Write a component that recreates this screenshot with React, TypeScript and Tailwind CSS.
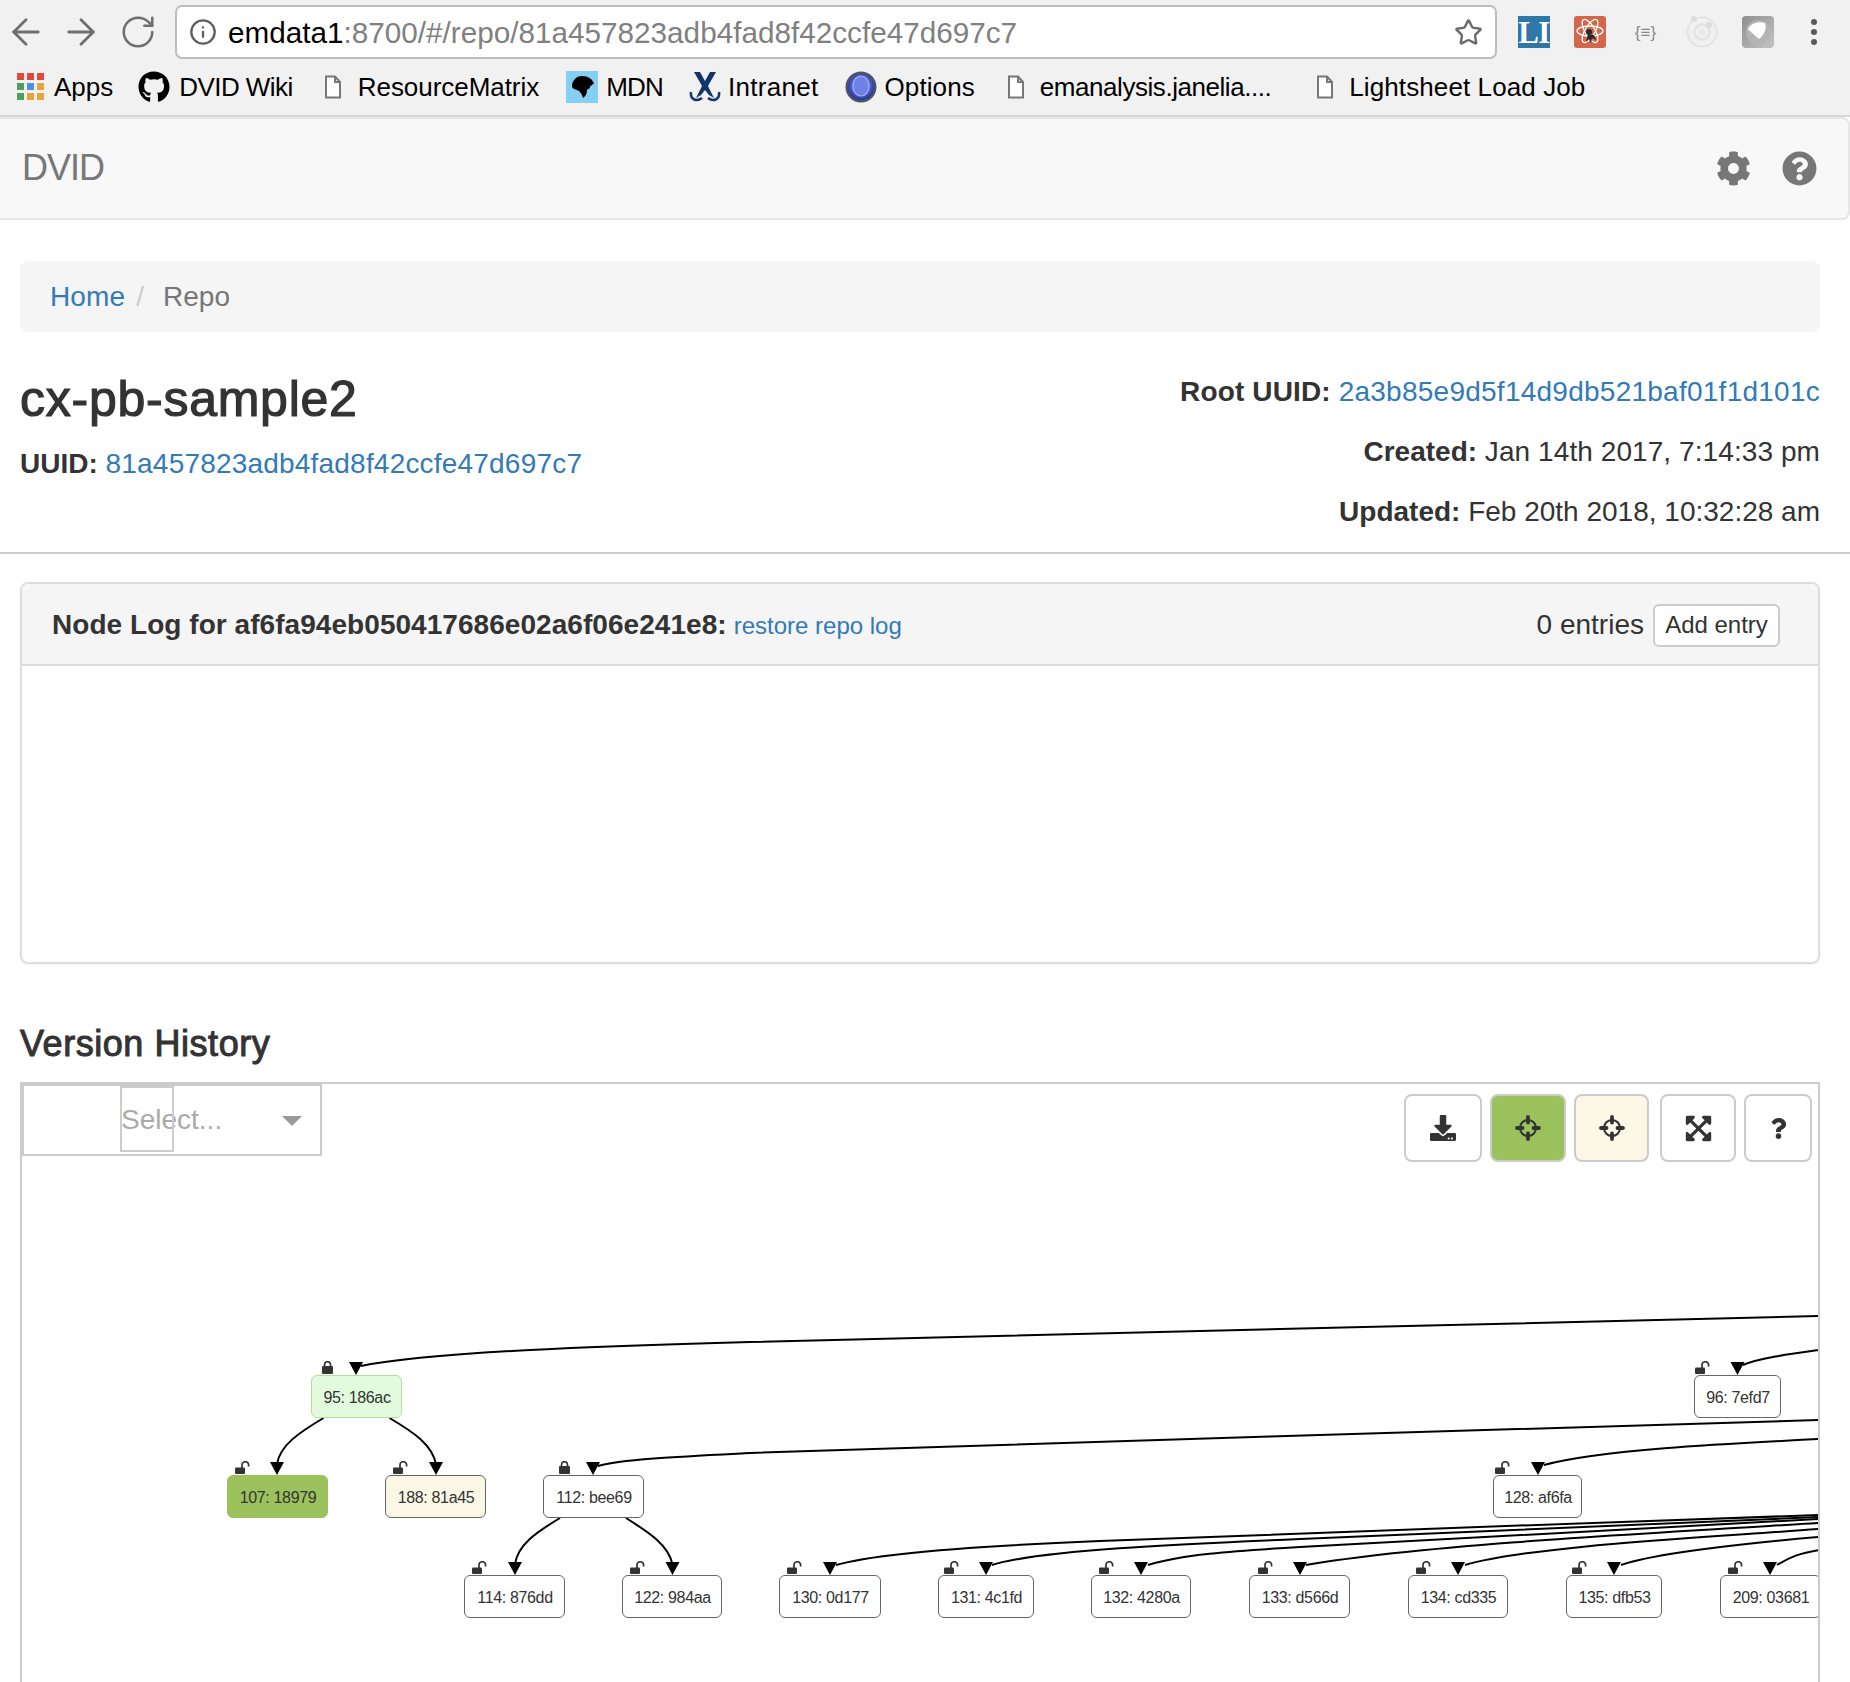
import React from "react";
import { ArrowLeft, ArrowRight, RotateCw, Info, Star } from "lucide-react";
import { FaGithub, FaCog, FaQuestionCircle, FaDownload, FaExpandArrowsAlt, FaQuestion } from "react-icons/fa";

const OX = 22;
const OY = 1084;

type N = { label: string; x: number; y: number; w: number; lock: number; locked?: boolean; tone?: "light" | "green" | "cream" };

const nodes: N[] = [
  { label: "95: 186ac", x: 311, y: 1375, w: 91, lock: 11, locked: true, tone: "light" },
  { label: "96: 7efd7", x: 1694, y: 1375, w: 87, lock: 1 },
  { label: "107: 18979", x: 227, y: 1475, w: 101, lock: 8, tone: "green" },
  { label: "188: 81a45", x: 385, y: 1475, w: 101, lock: 8, tone: "cream" },
  { label: "112: bee69", x: 543, y: 1475, w: 101, lock: 16, locked: true },
  { label: "128: af6fa", x: 1493, y: 1475, w: 89, lock: 2 },
  { label: "114: 876dd", x: 464, y: 1575, w: 101, lock: 8 },
  { label: "122: 984aa", x: 622, y: 1575, w: 100, lock: 8 },
  { label: "130: 0d177", x: 779, y: 1575, w: 102, lock: 8 },
  { label: "131: 4c1fd", x: 938, y: 1575, w: 96, lock: 6 },
  { label: "132: 4280a", x: 1091, y: 1575, w: 100, lock: 8 },
  { label: "133: d566d", x: 1249, y: 1575, w: 101, lock: 9 },
  { label: "134: cd335", x: 1408, y: 1575, w: 100, lock: 8 },
  { label: "135: dfb53", x: 1566, y: 1575, w: 96, lock: 6 },
  { label: "209: 03681", x: 1720, y: 1575, w: 101, lock: 8 },
];

const edges = [
  "M1819 1316 C1500 1323 1000 1337 750 1342 C600 1346 430 1352 361 1366",
  "M1819 1420 C1600 1427 1000 1444 750 1453 C690 1456 620 1459 598 1466",
  "M1819 1350 C1790 1354 1760 1358 1743 1365",
  "M1819 1439 C1720 1444 1600 1450 1544 1465",
  "M1819 1515 C1600 1522 1300 1534 1100 1541 C1000 1545 880 1552 836 1565",
  "M1819 1517 C1600 1526 1400 1535 1300 1539 C1180 1544 1040 1550 992 1565",
  "M1819 1519 C1600 1530 1400 1542 1300 1547 C1230 1551 1180 1555 1148 1565",
  "M1819 1523 C1650 1533 1420 1545 1306 1565",
  "M1819 1529 C1700 1538 1530 1546 1465 1565",
  "M1819 1537 C1750 1543 1660 1552 1621 1565",
  "M1819 1550 C1800 1553 1790 1557 1777 1565",
  "M323.5 1418 C300 1432 280 1445 277 1464",
  "M389.5 1418 C415 1433 432 1445 436 1464",
  "M560 1518 C535 1533 518 1545 515 1564",
  "M626 1518 C650 1533 668 1545 672.5 1564",
];

const tips: [number, number][] = [
  [356, 1375], [1737.5, 1375], [277, 1475], [436, 1475], [593, 1475], [1538, 1475],
  [515, 1575], [672.5, 1575], [830, 1575], [986, 1575], [1141, 1575], [1300, 1575],
  [1458, 1575], [1614, 1575], [1770, 1575],
];

const toneClass = {
  light: "bg-[#e2fbdc] border-[#b9dc9c]",
  green: "bg-[#9bc25c] border-[#9bc25c]",
  cream: "bg-[#faf7e5] border-[#666666]",
  none: "bg-white border-[#666666]",
};

function LockIcon() {
  return (
    <svg width="11" height="13" viewBox="0 0 11 13" className="block">
      <rect x="0" y="5" width="11" height="8" rx="1" fill="#333" />
      <path d="M2.500 6V3.700a3 3 0 0 1 6 0V6" fill="none" stroke="#333" strokeWidth="1.700" />
    </svg>
  );
}

function UnlockIcon() {
  return (
    <svg width="15" height="13" viewBox="0 0 15 13" className="block">
      <rect x="0" y="6.500" width="10" height="6.500" rx="1" fill="#333" />
      <path d="M7 7V4a3.300 3.300 0 0 1 6.600 0V5.500" fill="none" stroke="#333" strokeWidth="1.700" />
    </svg>
  );
}

function Crosshair() {
  return (
    <svg width="26" height="26" viewBox="0 0 26 26" fill="none" stroke="#333">
      <circle cx="13" cy="13" r="8" strokeWidth="2.200" />
      <path d="M13 2v5.500M13 18.500V24M2 13h5.500M18.500 13H24" strokeWidth="3.800" strokeLinecap="round" />
    </svg>
  );
}

function FileIcon() {
  return (
    <svg width="18" height="24" viewBox="0 0 18 24" className="shrink-0">
      <path d="M2 1.500h9l5 5.500v15.500H2z M11 1.500V7h5" fill="#fff" stroke="#777" strokeWidth="2" />
    </svg>
  );
}

function AppsIcon() {
  const c = ["#e4473c", "#e4473c", "#e4473c", "#4ea05a", "#4a8fe8", "#e8a33a", "#4ea05a", "#e8a33a", "#e8a33a"];
  return (
    <div className="grid grid-cols-3 gap-[3px] w-[27px] shrink-0">
      {c.map((x, i) => (
        <div key={i} className="h-[7px] w-[7px]" style={{ backgroundColor: x }} />
      ))}
    </div>
  );
}

function MdnIcon() {
  return (
    <svg width="32" height="32" viewBox="0 0 32 32" className="shrink-0">
      <rect width="32" height="32" fill="#83d0f2" />
      <path d="M6 15 C6 10 10 5 16 5 C22 5 27 8 28 13 C26 13 26 15 24 15 C25 17 22 18 21 19 C21 22 20 25 17 27 C16 23 14 20 11 19 C9 18 6 18 6 15Z" fill="#000" />
    </svg>
  );
}

function IntranetIcon() {
  return (
    <svg width="32" height="32" viewBox="0 0 32 32" className="shrink-0">
      <path d="M5 1 L11 1 L16 10 L21 1 L27 1 L19 15 L25 27 L20 24 L16 19 L12 24 L7 27 L13 15Z" fill="#12356b" />
      <path d="M2 21 C1 29 8 31 13 27 M30 21 C31 29 24 31 19 27" fill="none" stroke="#12356b" strokeWidth="2.500" />
    </svg>
  );
}

function GlobeIcon() {
  return (
    <svg width="32" height="32" viewBox="0 0 32 32" className="shrink-0">
      <defs>
        <radialGradient id="glb" cx="50%" cy="45%" r="55%">
          <stop offset="0%" stopColor="#8d9cf0" />
          <stop offset="70%" stopColor="#4a5bc8" />
          <stop offset="100%" stopColor="#26308a" />
        </radialGradient>
      </defs>
      <circle cx="16" cy="16" r="15.500" fill="#4f5368" />
      <circle cx="16" cy="16" r="13" fill="url(#glb)" />
      <ellipse cx="16" cy="15" rx="8" ry="10" fill="#6f80e6" stroke="#a9b4f5" strokeWidth="1.200" />
    </svg>
  );
}

function ReactExt() {
  return (
    <svg width="32" height="32" viewBox="0 0 32 32">
      <rect width="32" height="32" rx="3" fill="#d2674c" />
      <g fill="none" stroke="#fff" strokeWidth="1.300">
        <ellipse cx="16" cy="15" rx="13" ry="5" />
        <ellipse cx="16" cy="15" rx="13" ry="5" transform="rotate(60 16 15)" />
        <ellipse cx="16" cy="15" rx="13" ry="5" transform="rotate(120 16 15)" />
      </g>
      <circle cx="15" cy="16" r="3" fill="#2a2a2a" />
      <path d="M14 18 L12 26 L15 23 L17 27 L18 22 L22 24 L20 19Z" fill="#2a2a2a" />
    </svg>
  );
}

function RingExt() {
  return (
    <svg width="32" height="32" viewBox="0 0 32 32">
      <g fill="none" stroke="#e4e4e4">
        <circle cx="16" cy="16" r="14.500" strokeWidth="2" />
        <circle cx="16" cy="16" r="7.500" strokeWidth="3" />
      </g>
      <circle cx="16" cy="16" r="3.500" fill="#e8e8e8" />
      <circle cx="8" cy="3" r="3" fill="#dcdcdc" />
      <circle cx="23" cy="9" r="3" fill="#dcdcdc" />
    </svg>
  );
}

function GrayExt() {
  return (
    <svg width="32" height="32" viewBox="0 0 32 32">
      <defs>
        <linearGradient id="gx" x1="0" y1="0" x2="1" y2="1">
          <stop offset="0%" stopColor="#8e8e8e" />
          <stop offset="100%" stopColor="#c4c4c4" />
        </linearGradient>
      </defs>
      <rect width="32" height="32" rx="4" fill="url(#gx)" />
      <circle cx="16" cy="16" r="12" fill="#b4b4b4" />
      <path d="M6 13 C9 7 16 5 23 7 C25 13 22 19 17 23 C13 20 9 16 6 13Z" fill="#fff" />
    </svg>
  );
}

function Bookmark({ cls, icon, text }: { cls: string; icon: React.ReactNode; text: string }) {
  return (
    <div className={`flex items-center ${cls}`}>
      {icon}
      <span className="whitespace-nowrap">{text}</span>
    </div>
  );
}

export default function App() {
  return (
    <div className="h-[1682px] w-[1850px] overflow-hidden bg-white font-['Liberation_Sans',Arial,sans-serif] text-[28px] leading-[40px] text-[#333333]">
      {/* Browser chrome */}
      <div className="h-[117px] bg-[#f1f1f1] border-b-2 border-[#d6d6d6]">
        <div className="flex h-[64px] items-center">
          <div className="flex w-[175px] items-center pl-[5px] text-[#6e6e6e]">
            <ArrowLeft size={42} strokeWidth={1.6} />
            <ArrowRight size={42} strokeWidth={1.6} className="ml-[13px]" />
            <RotateCw size={38} strokeWidth={1.6} className="ml-[17px]" />
          </div>
          <div className="flex h-[54px] w-[1322px] items-center rounded-[7px] border-2 border-[#bdbdbd] bg-white pl-[12px] pr-[12px]">
            <Info size={28} strokeWidth={2} className="text-[#5f5f5f]" />
            <div className="ml-[11px] flex-1 whitespace-nowrap pt-[2px] text-[29.7px]">
              <span className="text-black">emdata1</span>
              <span className="text-[#808080]">:8700/#/repo/81a457823adb4fad8f42ccfe47d697c7</span>
            </div>
            <Star size={29} strokeWidth={2} className="text-[#6a6a6a]" />
          </div>
          <div className="ml-[21px] flex h-[32px] w-[32px] items-center justify-center bg-[#2f77a6] font-['Liberation_Serif',serif] text-[31px] font-bold leading-none tracking-[-0.5px] text-white">
            LI
          </div>
          <div className="ml-[24px] h-[32px]">
            <ReactExt />
          </div>
          <div className="ml-[27px] w-[25px] text-center text-[17px] leading-none text-[#8a8a8a] whitespace-nowrap">{"{≡}"}</div>
          <div className="ml-[28px] h-[32px]">
            <RingExt />
          </div>
          <div className="ml-[24px] h-[32px]">
            <GrayExt />
          </div>
          <div className="ml-[37px] flex flex-col gap-[4px]">
            <div className="h-[6px] w-[6px] rounded-full bg-[#5a5a5a]" />
            <div className="h-[6px] w-[6px] rounded-full bg-[#5a5a5a]" />
            <div className="h-[6px] w-[6px] rounded-full bg-[#5a5a5a]" />
          </div>
        </div>
        <div className="flex h-[45px] items-center pl-[17px] text-[26px] text-black">
          <Bookmark cls="gap-[10px]" icon={<AppsIcon />} text="Apps" />
          <Bookmark cls="ml-[25px] gap-[9px] tracking-[-0.55px]" icon={<FaGithub size={32} className="shrink-0" />} text="DVID Wiki" />
          <Bookmark cls="ml-[31px] gap-[16px] tracking-[-0.05px]" icon={<FileIcon />} text="ResourceMatrix" />
          <Bookmark cls="ml-[27px] gap-[8px] tracking-[-0.8px]" icon={<MdnIcon />} text="MDN" />
          <Bookmark cls="ml-[26px] gap-[7px] tracking-[0.3px]" icon={<IntranetIcon />} text="Intranet" />
          <Bookmark cls="ml-[26px] gap-[8px] tracking-[0.1px]" icon={<GlobeIcon />} text="Options" />
          <Bookmark cls="ml-[32px] gap-[15px] tracking-[-0.45px]" icon={<FileIcon />} text="emanalysis.janelia...." />
          <Bookmark cls="ml-[45px] gap-[15px] tracking-[0.1px]" icon={<FileIcon />} text="Lightsheet Load Job" />
        </div>
      </div>

      {/* Navbar */}
      <div className="flex h-[103px] items-center justify-between rounded-r-[8px] border-2 border-l-0 border-[#e7e7e7] bg-[#f8f8f8] pb-[1px] pl-[22px] pr-[31px]">
        <span className="text-[36px] tracking-[-1px] text-[#777777]">DVID</span>
        <div className="flex items-center gap-[31px] text-[#777777]">
          <FaCog size={35} />
          <FaQuestionCircle size={35} />
        </div>
      </div>

      <div className="pl-[20px] pr-[30px]">
        {/* Breadcrumb */}
        <div className="mt-[41px] flex h-[71px] items-center rounded-[8px] bg-[#f5f5f5] px-[30px]">
          <span className="tracking-[0.15px] text-[#337ab7]">Home</span>
          <span className="ml-[11px] text-[#cccccc]">/</span>
          <span className="ml-[19px] text-[#777777]">Repo</span>
        </div>

        {/* Repo heading */}
        <div className="flex h-[210px] justify-between pt-[30px]">
          <div className="pt-[9px]">
            <div className="text-[50px] leading-[56px] tracking-[0.75px] [-webkit-text-stroke:1.2px_#333333]">cx-pb-sample2</div>
            <div className="mt-[17px]">
              <b>UUID:</b> <span className="tracking-[0.2px] text-[#337ab7]">81a457823adb4fad8f42ccfe47d697c7</span>
            </div>
          </div>
          <div className="text-right leading-[60px]">
            <div>
              <b className="tracking-[0.15px]">Root UUID:</b> <span className="tracking-[0.25px] text-[#337ab7]">2a3b85e9d5f14d9db521baf01f1d101c</span>
            </div>
            <div>
              <b>Created:</b> <span className="tracking-[0.08px]">Jan 14th 2017, 7:14:33 pm</span>
            </div>
            <div>
              <b>Updated:</b> <span>Feb 20th 2018, 10:32:28 am</span>
            </div>
          </div>
        </div>
      </div>

      <div className="mt-[10px] h-[2px] bg-[#cccccc]" />

      <div className="pl-[20px] pr-[30px]">
        {/* Panel */}
        <div className="mt-[28px] h-[382px] overflow-hidden rounded-[8px] border-2 border-[#dddddd] shadow-[0_1px_2px_rgba(0,0,0,0.05)]">
          <div className="flex h-[82px] items-center justify-between border-b-2 border-[#dddddd] bg-[#f5f5f5] pl-[30px] pr-[38px] pt-[2px]">
            <div className="flex items-baseline">
              <b className="tracking-[0.05px]">Node Log for af6fa94eb050417686e02a6f06e241e8:</b>
              <span className="ml-[7px] text-[24px] text-[#337ab7]">restore repo log</span>
            </div>
            <div className="flex items-center gap-[9px]">
              <span>0 entries</span>
              <div className="flex h-[43px] w-[127px] items-center justify-center rounded-[6px] border-2 border-[#cccccc] bg-white text-[24px]">
                Add entry
              </div>
            </div>
          </div>
        </div>

        <div className="mt-[60px] text-[36px] leading-[40px] tracking-[0.55px] [-webkit-text-stroke:1px_#333333]">Version History</div>

        {/* Graph */}
        <div className="relative mt-[18px] h-[640px] overflow-hidden border-2 border-[#cccccc] bg-white">
          <svg className="absolute left-0 top-0" width="1797" height="640" viewBox={`${OX} ${OY} 1797 640`}>
            {edges.map((d, i) => (
              <path key={i} d={d} fill="none" stroke="#000" strokeWidth="2" />
            ))}
            {tips.map(([x, y], i) => (
              <polygon key={i} points={`${x},${y} ${x - 7},${y - 13} ${x + 7},${y - 13}`} fill="#000" />
            ))}
          </svg>

          {nodes.map((n) => (
            <div key={n.label}>
              <div
                className={`absolute flex h-[43px] items-center justify-center whitespace-nowrap rounded-[6px] border pl-[1px] pt-[3px] text-[16px] leading-none tracking-[-0.35px] text-[#333333] ${toneClass[n.tone ?? "none"]}`}
                style={{ left: n.x - OX, top: n.y - OY, width: n.w }}
              >
                {n.label}
              </div>
              <div className="absolute" style={{ left: n.x - OX + n.lock, top: n.y - OY - 14 }}>
                {n.locked ? <LockIcon /> : <UnlockIcon />}
              </div>
            </div>
          ))}

          <div className="relative flex items-start justify-between">
            <div className="relative h-[72px] w-[300px] border-2 border-[#cccccc] bg-white">
              <div className="absolute left-[96px] top-0 h-[66px] w-[54px] border-2 border-[#cccccc]" />
              <div className="flex h-[68px] items-center pl-[97px] text-[#aaaaaa]">Select...</div>
              <div className="absolute left-[258px] top-[30px] h-0 w-0 border-x-[10px] border-t-[10px] border-x-transparent border-t-[#999999]" />
            </div>
            <div className="mr-[6px] mt-[10px] flex text-[#333333]">
              <div className="flex h-[68px] w-[78px] items-center justify-center rounded-[8px] border-2 border-[#cccccc] bg-white">
                <FaDownload size={26} />
              </div>
              <div className="ml-[8px] flex h-[68px] w-[76px] items-center justify-center rounded-[8px] border-2 border-[#cccccc] bg-[#9bc25c]">
                <Crosshair />
              </div>
              <div className="ml-[8px] flex h-[68px] w-[75px] items-center justify-center rounded-[8px] border-2 border-[#cccccc] bg-[#faf7e5]">
                <Crosshair />
              </div>
              <div className="ml-[11px] flex h-[68px] w-[76px] items-center justify-center rounded-[8px] border-2 border-[#cccccc] bg-white">
                <FaExpandArrowsAlt size={29} />
              </div>
              <div className="ml-[8px] flex h-[68px] w-[68px] items-center justify-center rounded-[8px] border-2 border-[#cccccc] bg-white">
                <FaQuestion size={21} />
              </div>
            </div>
          </div>
        </div>
      </div>
    </div>
  );
}
